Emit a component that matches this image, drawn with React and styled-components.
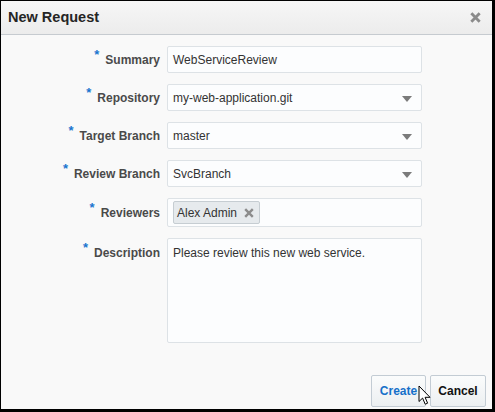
import React from "react";
import styled, { createGlobalStyle } from "styled-components";

const Global = createGlobalStyle`
  html, body { margin: 0; padding: 0; background: #fff; }
  body { font-family: "Liberation Sans", Arial, sans-serif; }
  * { box-sizing: border-box; }
`;

const Window = styled.div`
  position: relative;
  width: 495px;
  height: 412px;
  border-style: solid;
  border-color: #000;
  border-width: 1px 3px 3px 1px;
  background: #f9f9f9;
  display: flex;
  flex-direction: column;
`;

const Header = styled.div`
  height: 34px;
  flex: none;
  display: flex;
  align-items: center;
  justify-content: space-between;
  padding: 0 11px 0 7px;
  background: linear-gradient(#f6f6f6, #ececec);
  border-bottom: 1px solid #c6cbd0;
`;

const Title = styled.div`
  font-size: 14.5px;
  font-weight: bold;
  color: #252525;
  margin-top: -1px;
`;

const CloseBtn = styled.div`
  width: 12px;
  height: 12px;
  display: flex;
  align-items: center;
  justify-content: center;
`;

const Form = styled.div`
  display: flex;
  flex-direction: column;
  gap: 11px;
  padding-top: 11px;
`;

const Row = styled.div`
  display: grid;
  grid-template-columns: 159px 255px;
  column-gap: 7px;
  align-items: ${(p) => (p.$top ? "start" : "center")};
`;

const Label = styled.label`
  text-align: right;
  font-size: 12px;
  font-weight: bold;
  color: #4a4a4a;
  white-space: nowrap;
  padding-top: ${(p) => (p.$top ? "7px" : "0")};
`;

const Req = styled.span`
  color: #1a75cf;
  font-size: 13px;
  font-weight: bold;
  position: relative;
  top: -5px;
  margin-right: 6px;
`;

const Box = styled.div`
  position: relative;
  height: ${(p) => p.$h || 27}px;
  background: #fcfdfe;
  border: 1px solid #dde2e6;
  border-radius: 2px;
  font-size: 12px;
  color: #333;
  display: flex;
  align-items: ${(p) => (p.$top ? "flex-start" : "center")};
  padding: ${(p) => (p.$top ? "7px 5px" : "0 5px")};
  padding-right: ${(p) => (p.$select ? "28px" : "5px")};
`;

const Arrow = styled.div`
  position: absolute;
  right: 9px;
  top: 50%;
  margin-top: -2px;
  width: 0;
  height: 0;
  border-left: 5px solid transparent;
  border-right: 5px solid transparent;
  border-top: 6px solid #7b7b7b;
`;

const Chip = styled.div`
  height: 23px;
  display: inline-flex;
  align-items: center;
  gap: 7px;
  padding: 0 5px 0 3px;
  background: #e6eaed;
  border: 1px solid #c6cdd2;
  border-radius: 2px;
  font-size: 12px;
  color: #333;
`;

const Footer = styled.div`
  margin-top: auto;
  display: flex;
  justify-content: flex-end;
  gap: 4px;
  padding: 0 6px 2px 0;
`;

const Button = styled.button`
  height: 32px;
  width: ${(p) => p.$w}px;
  padding: 0;
  font-family: "Liberation Sans", Arial, sans-serif;
  font-size: 12px;
  font-weight: bold;
  color: ${(p) => (p.$primary ? "#1570c9" : "#111")};
  background: linear-gradient(#fbfcfc, #eceff1);
  border: 1px solid #c3ccd4;
  border-radius: 2px;
`;

const Cursor = styled.svg`
  position: absolute;
  left: 417px;
  top: 384px;
`;

const X = ({ size = 10, color = "#8a8a8a", w = 2.4 }) => (
  <svg width={size} height={size} viewBox="0 0 10 10">
    <path d="M1.2 1.2 L8.8 8.8 M8.8 1.2 L1.2 8.8" stroke={color} strokeWidth={w} strokeLinecap="butt" />
  </svg>
);

const Field = ({ label, children, top }) => (
  <Row $top={top}>
    <Label $top={top}>
      <Req>*</Req>
      {label}
    </Label>
    {children}
  </Row>
);

export default function App() {
  return (
    <>
      <Global />
      <Window>
        <Header>
          <Title>New Request</Title>
          <CloseBtn>
            <X size={11} color="#8b8b8b" w={2.6} />
          </CloseBtn>
        </Header>
        <Form>
          <Field label="Summary">
            <Box>WebServiceReview</Box>
          </Field>
          <Field label="Repository">
            <Box $select>
              my-web-application.git
              <Arrow />
            </Box>
          </Field>
          <Field label="Target Branch">
            <Box $select>
              master
              <Arrow />
            </Box>
          </Field>
          <Field label="Review Branch">
            <Box $select>
              SvcBranch
              <Arrow />
            </Box>
          </Field>
          <Field label="Reviewers">
            <Box $h={29}>
              <Chip>
                Alex Admin
                <X size={10} color="#8c8c8c" w={2.4} />
              </Chip>
            </Box>
          </Field>
          <Field label="Description" top>
            <Box $h={105} $top>
              Please review this new web service.
            </Box>
          </Field>
        </Form>
        <Footer>
          <Button $primary $w={55}>Create</Button>
          <Button $w={56}>Cancel</Button>
        </Footer>
        <Cursor width="14" height="21" viewBox="0 0 14 21">
          <path
            d="M1 1 L1 16.5 L4.6 13.1 L7.2 19.2 L9.6 18.2 L7.1 12.3 L12 12.3 Z"
            fill="#fff"
            stroke="#000"
            strokeWidth="1"
            strokeLinejoin="miter"
          />
        </Cursor>
      </Window>
    </>
  );
}
